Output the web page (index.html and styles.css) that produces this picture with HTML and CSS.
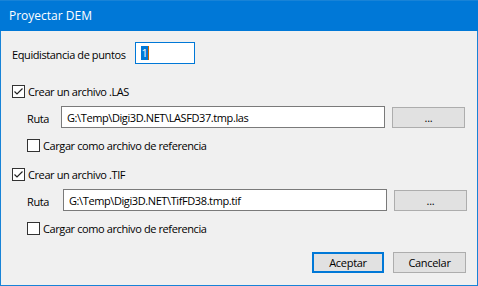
FILE: index.html
```html
<!DOCTYPE html>
<html>
<head>
<meta charset="utf-8">
<link rel="stylesheet" href="styles.css">
</head>
<body>
<div class="window">
  <div class="titlebar">Proyectar DEM</div>
  <div class="client">
    <div class="row equi">
      <span class="equi-label">Equidistancia de puntos</span>
      <div class="input focus small"><span class="sel">1</span><span class="caret"></span></div>
    </div>

    <div class="row check r-las">
      <span class="cb"><svg viewBox="0 0 11 11" width="11" height="11"><polyline points="1.5,5.5 4,8 9.5,2.5" fill="none" stroke="#222" stroke-width="1.2"/></svg></span>
      <span>Crear un archivo .LAS</span>
    </div>

    <div class="row path r-path1">
      <span class="ruta">Ruta</span>
      <div class="input path-input">G:\Temp\Digi3D.NET\LASFD37.tmp.las</div>
      <button class="btn browse">...</button>
    </div>

    <div class="row check sub r-sub1">
      <span class="cb"></span>
      <span>Cargar como archivo de referencia</span>
    </div>

    <div class="row check r-tif">
      <span class="cb"><svg viewBox="0 0 11 11" width="11" height="11"><polyline points="1.5,5.5 4,8 9.5,2.5" fill="none" stroke="#222" stroke-width="1.2"/></svg></span>
      <span>Crear un archivo .TIF</span>
    </div>

    <div class="row path r-path2">
      <span class="ruta wide">Ruta</span>
      <div class="input path-input">G:\Temp\Digi3D.NET\TifFD38.tmp.tif</div>
      <button class="btn browse b2">...</button>
    </div>

    <div class="row check sub r-sub2">
      <span class="cb"></span>
      <span>Cargar como archivo de referencia</span>
    </div>

    <div class="row actions">
      <button class="btn default ok">Aceptar</button>
      <button class="btn cancel">Cancelar</button>
    </div>
  </div>
</div>
</body>
</html>
```

FILE: styles.css
```css
* { box-sizing: border-box; }
html, body { margin: 0; padding: 0; }
body {
  width: 478px;
  height: 286px;
  overflow: hidden;
  font-family: "Open Sans", "Noto Sans", sans-serif;
  font-size: 11px;
  letter-spacing: -0.4px;
  color: #000;
}
.window {
  width: 478px;
  height: 286px;
  background: #f0f0f0;
  border: 1px solid #1883d7;
  border-top: none;
  display: flex;
  flex-direction: column;
}
.titlebar {
  height: 31px;
  margin: 0 -1px;
  background: #0078d7;
  border-top: 1px solid #1883d7;
  color: #fff;
  font-size: 12px;
  letter-spacing: 0;
  padding-left: 9px;
  line-height: 29px;
}
.client {
  flex: 1;
  display: flex;
  flex-direction: column;
  padding-left: 11px;
}
.row { display: flex; align-items: center; }

.equi { margin-top: 11px; height: 22px; }
.equi-label { width: 123px; padding-top: 2px; white-space: nowrap; }
.input {
  background: #fff;
  border: 1px solid #7a7a7a;
  height: 22px;
  padding-left: 5px;
  display: flex;
  align-items: center;
  white-space: nowrap;
  overflow: hidden;
}
.input.focus { border-color: #0078d7; }
.input.small { width: 60px; }
.sel {
  background: #0078d7;
  color: #fff;
  line-height: 14px;
  padding: 0 0.5px;
}
.caret {
  width: 1px;
  height: 14px;
  background: #c86400;
}

.check { height: 13px; }
.cb {
  width: 13px;
  height: 13px;
  border: 1px solid #333;
  background: #fff;
  margin-right: 3px;
  display: flex;
  align-items: center;
  justify-content: center;
  flex: none;
}
.cb svg { display: block; }
.check.sub { padding-left: 15px; }

.r-las { margin-top: 21px; }
.r-path1 { margin-top: 8px; }
.r-sub1 { margin-top: 11px; }
.r-tif { margin-top: 16px; }
.r-path2 { margin-top: 8px; }
.r-sub2 { margin-top: 11px; }

.path { height: 22px; padding-left: 15px; align-items: flex-start; }
.ruta { width: 34px; height: 22px; line-height: 22px; padding-top: 2px; }
.ruta.wide { width: 36px; }
.path-input { width: 324px; }

.btn {
  font-family: inherit;
  font-size: 11px;
  letter-spacing: -0.3px;
  color: #000;
  background: #e1e1e1;
  border: 1px solid #adadad;
  height: 21px;
  padding: 0;
  margin: 0;
  display: flex;
  align-items: center;
  justify-content: center;
}
.browse { width: 73px; margin-left: 7px; margin-top: 1px; }
.browse.b2 { margin-top: 1px; }

.actions {
  margin-top: 17px;
  height: 21px;
  justify-content: flex-end;
  padding-right: 11px;
  gap: 9px;
}
.ok { width: 72px; }
.cancel { width: 73px; }
.default { border: 2px solid #0078d7; }
```
